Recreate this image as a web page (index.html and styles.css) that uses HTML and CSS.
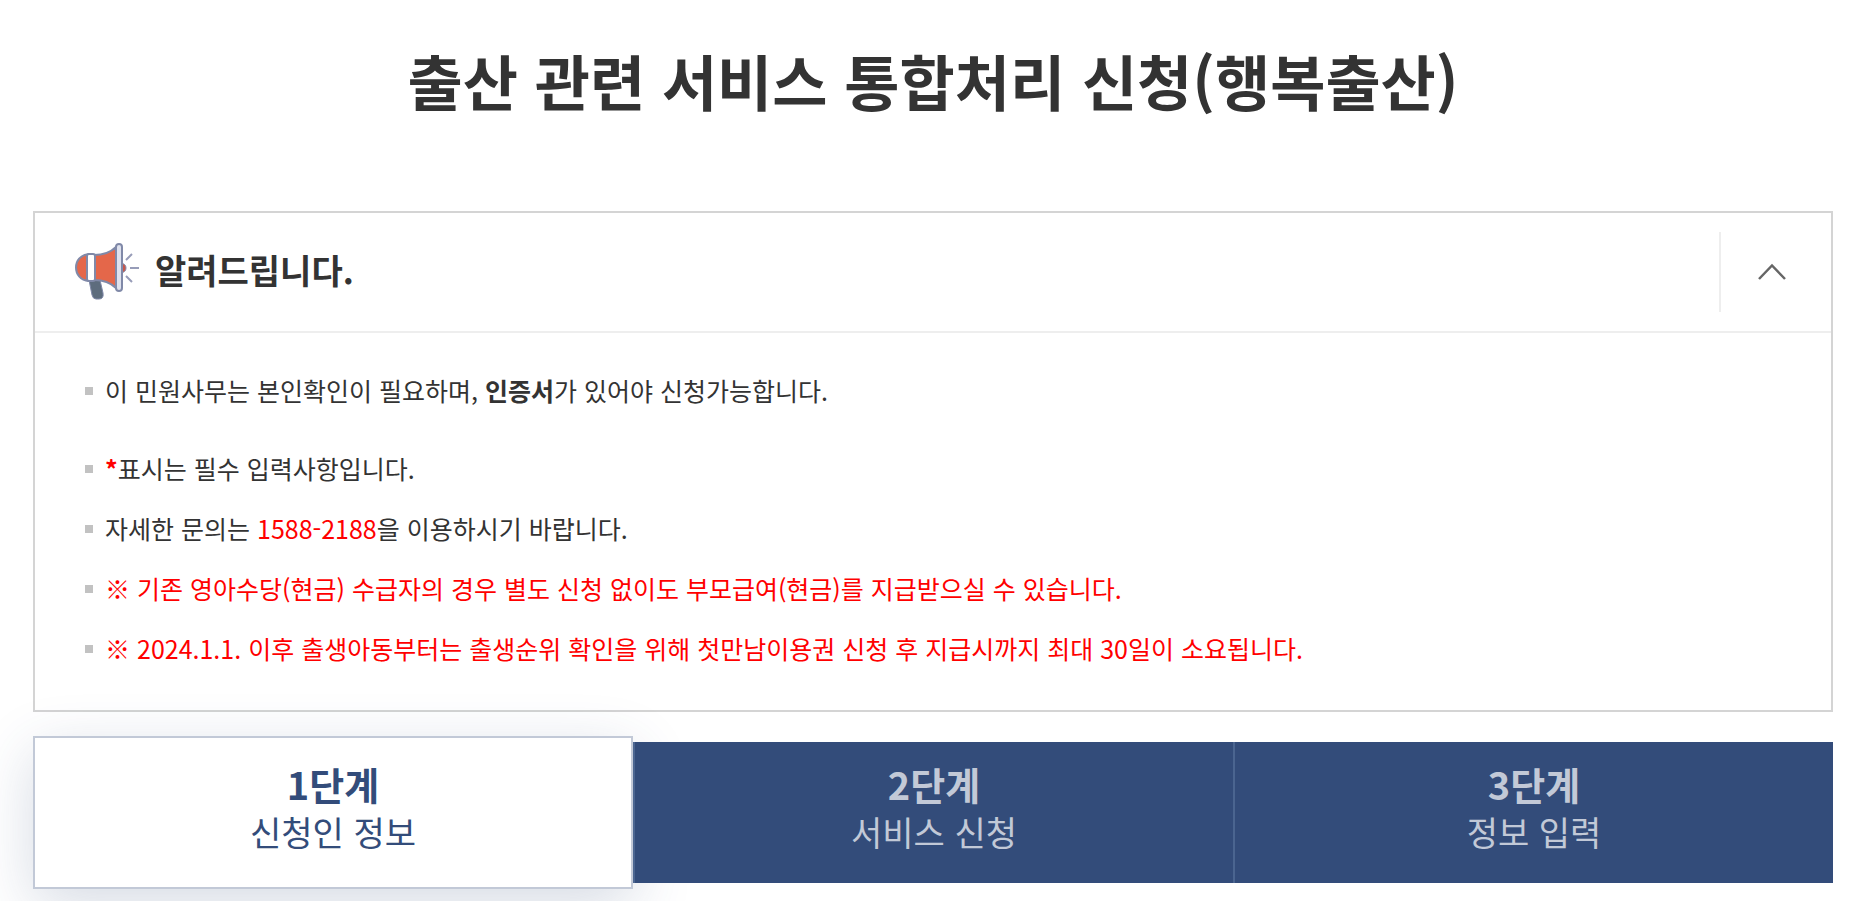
FILE: index.html
```html
<!DOCTYPE html>
<html lang="ko">
<head>
<meta charset="utf-8">
<meta name="viewport" content="width=device-width, initial-scale=1">
<title>출산 관련 서비스 통합처리 신청(행복출산)</title>
<link rel="stylesheet" href="styles.css">
</head>
<body>
<main class="page">
  <h1 class="page-title">출산 관련 서비스 통합처리 신청(행복출산)</h1>

  <section class="notice" aria-labelledby="notice-title">
    <header class="notice-head">
      <svg class="notice-icon" viewBox="0 0 64 58" aria-hidden="true">
        <path d="M14 37h11l3 13q1 6-4 6h-3q-3 0-4-4z" fill="#5d6c7d" stroke="#8089a8" stroke-width="1"/>
        <path d="M46 20q5 1 5 5t-5 5z" fill="#c9574a" stroke="#8089a8" stroke-width="1"/>
        <path d="M14 11C5 12 1 18 1 24.500s4 12.500 13 13.500z" fill="#e4674a" stroke="#8089a8" stroke-width="2"/>
        <path d="M19 12q14 0 22-8v41q-8-8-22-8z" fill="#e4674a" stroke="#8089a8" stroke-width="2"/>
        <rect x="12" y="11" width="8" height="27" rx="2" fill="#fff" stroke="#8089a8" stroke-width="2"/>
        <rect x="41" y="1" width="6" height="47" rx="3" fill="#dfe2ee" stroke="#8089a8" stroke-width="2"/>
        <path d="M51 17l6-6M55 25h9M51 33l6 6" fill="none" stroke="#979cb8" stroke-width="2"/>
      </svg>
      <h2 class="notice-title" id="notice-title">알려드립니다.</h2>
      <button class="notice-toggle" type="button" aria-label="안내 접기" aria-expanded="true" aria-controls="notice-body">
        <svg class="chevron" viewBox="0 0 28 18" aria-hidden="true">
          <path d="M1 16L14 2.500L27 16" fill="none" stroke="#666" stroke-width="2.500"/>
        </svg>
      </button>
    </header>
    <div class="notice-body" id="notice-body">
      <ul class="notice-list">
        <li>이 민원사무는 본인확인이 필요하며, <strong>인증서</strong>가 있어야 신청가능합니다.</li>
      </ul>
      <ul class="notice-list">
        <li><span class="red required">*</span>표시는 필수 입력사항입니다.</li>
        <li>자세한 문의는 <span class="red">1588-2188</span>을 이용하시기 바랍니다.</li>
        <li class="red">※ 기존 영아수당(현금) 수급자의 경우 별도 신청 없이도 부모급여(현금)를 지급받으실 수 있습니다.</li>
        <li class="red">※ 2024.1.1. 이후 출생아동부터는 출생순위 확인을 위해 첫만남이용권 신청 후 지급시까지 최대 30일이 소요됩니다.</li>
      </ul>
    </div>
  </section>

  <ol class="steps">
    <li class="step current" aria-current="step"><strong>1단계</strong><span>신청인 정보</span></li>
    <li class="step"><strong>2단계</strong><span>서비스 신청</span></li>
    <li class="step"><strong>3단계</strong><span>정보 입력</span></li>
  </ol>
</main>
</body>
</html>
```
FILE: styles.css
```css
* {
  box-sizing: border-box;
}

body {
  margin: 0;
  background: #fff;
  color: #333;
  font-family: "Noto Sans CJK KR", sans-serif;
  font-size: 25px;
  line-height: 36px;
}

h1,
h2,
ul,
ol {
  margin: 0;
  padding: 0;
}

ul,
ol {
  list-style: none;
}

.page {
  padding: 36px 37px 12px 33px;
}

.page-title {
  margin-bottom: 87px;
  font-size: 60px;
  line-height: 88px;
  font-weight: 700;
  text-align: center;
}

.notice {
  border: 2px solid #d4d4d4;
}

.notice-head {
  display: flex;
  align-items: center;
  height: 120px;
  padding-left: 40px;
  border-bottom: 2px solid #eee;
}

.notice-icon {
  width: 64px;
  height: 58px;
  margin-right: 16px;
}

.notice-title {
  flex: 1;
  padding-bottom: 4px;
  font-size: 34px;
  line-height: 48px;
  font-weight: 700;
}

.notice-toggle {
  display: flex;
  align-items: center;
  justify-content: center;
  width: 112px;
  height: 80px;
  padding: 0 8px 0 0;
  border: 0;
  border-left: 2px solid #eee;
  background: none;
  cursor: pointer;
}

.chevron {
  width: 28px;
  height: 18px;
}

.notice-body {
  display: grid;
  gap: 42px;
  padding: 39px 50px 44px;
}

.notice-list {
  display: grid;
  gap: 24px;
}

.notice-list li::before {
  content: "";
  display: inline-block;
  width: 8px;
  height: 8px;
  margin-right: 12px;
  background: #c2c2c2;
  vertical-align: 6px;
}

.red {
  color: #f00;
}

.required {
  font-weight: 700;
}

.steps {
  display: grid;
  grid-template-columns: repeat(3, 1fr);
  align-items: center;
  margin-top: 24px;
}

.step {
  display: flex;
  flex-direction: column;
  align-items: center;
  padding: 18px 0 27px;
  border-left: 2px solid #4b6590;
  background: #334c7a;
  color: #c2c9d7;
}

.step strong {
  font-size: 38px;
  line-height: 48px;
}

.step span {
  font-size: 34px;
  line-height: 48px;
}

.step.current {
  padding: 22px 0 31px;
  border: 2px solid #c2c9d7;
  background: #fff;
  color: #334c7a;
  box-shadow: 0 16px 60px rgba(51, 76, 122, 0.2);
}

.step:nth-child(2) {
  position: relative;
}
```
